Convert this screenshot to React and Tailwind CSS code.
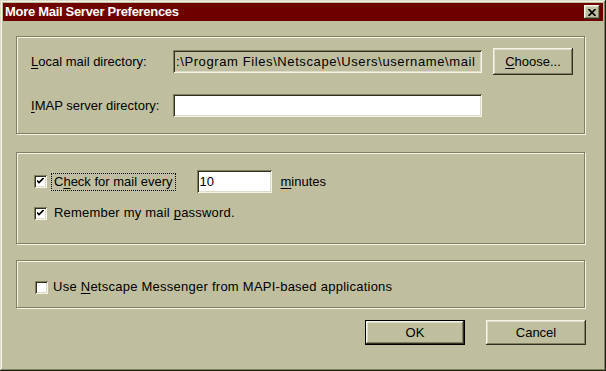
import React from 'react';

const font = { fontFamily: '"Liberation Sans", Arial, sans-serif' };

const raised = 'shadow-[inset_-1px_-1px_#303020,inset_1px_1px_#f4f4e8,inset_-2px_-2px_#808060,inset_2px_2px_#dcdcc8]';
const sunken = 'shadow-[inset_1px_1px_#808060,inset_-1px_-1px_#f4f4e8,inset_2px_2px_#303020,inset_-2px_-2px_#dcdcc8]';
const etched = 'border border-[#808060] shadow-[1px_1px_0_#f4f4e8,inset_1px_1px_0_#f4f4e8]';

const U = ({ children }) => <span className="underline underline-offset-2">{children}</span>;

const Check = ({ checked }) => (
  <div className={`w-[13px] h-[13px] bg-white shrink-0 flex items-center justify-center ${sunken}`}>
    {checked && (
      <svg width="7" height="7" viewBox="0 0 7 7">
        <path d="M0 2.5 L2 4.5 L7 -0.5" stroke="#000" strokeWidth="1.6" fill="none" />
      </svg>
    )}
  </div>
);

const Button = ({ children, w, h, isDefault }) => (
  <div
    className={`flex items-center justify-center text-[13px] text-black ${w} ${h} ${
      isDefault
        ? 'border border-black shadow-[inset_-1px_-1px_#303020,inset_1px_1px_#f4f4e8,inset_-2px_-2px_#808060,inset_2px_2px_#dcdcc8]'
        : raised
    }`}
  >
    {children}
  </div>
);

export default function App() {
  return (
    <div
      style={font}
      className="w-[606px] h-[371px] bg-[#bfbf9f] p-[3px] flex flex-col text-[13px] text-black shadow-[inset_-1px_-1px_#202018,inset_1px_1px_#dcdcc8,inset_-2px_-2px_#808060,inset_2px_2px_#f4f4e8]"
    >
      {/* title bar */}
      <div className="h-[18px] bg-[#6f0000] flex items-center justify-between pl-[2px] pr-[3px]">
        <span className="text-white font-bold text-[13px] tracking-[-0.3px]">More Mail Server Preferences</span>
        <div className={`w-[16px] h-[14px] bg-[#bfbf9f] flex items-center justify-center ${raised}`}>
          <svg width="8" height="7" viewBox="0 0 8 7">
            <path d="M0.5 0 L7.5 7 M7.5 0 L0.5 7" stroke="#000" strokeWidth="1.6" />
          </svg>
        </div>
      </div>

      <div className="flex flex-col pl-[13px] pt-[15px]">
        {/* group 1 */}
        <div className={`w-[569px] h-[98px] ${etched} pl-[14px] pt-[11px]`}>
          <div className="flex items-center h-[27px]">
            <div className="w-[142px]"><U>L</U>ocal mail directory:</div>
            <div className={`w-[309px] h-[23px] flex items-center pl-[3px] overflow-hidden whitespace-nowrap tracking-[0.6px] ${sunken}`}>
              :\Program Files\Netscape\Users\username\mail
            </div>
            <div className="ml-[11px]">
              <Button w="w-[80px]" h="h-[27px]"><U>C</U>hoose...</Button>
            </div>
          </div>
          <div className="flex items-center h-[23px] mt-[19px]">
            <div className="w-[142px]"><U>I</U>MAP server directory:</div>
            <div className={`w-[309px] h-[23px] bg-white ${sunken}`} />
          </div>
        </div>

        {/* group 2 */}
        <div className={`w-[569px] h-[92px] mt-[18px] ${etched} pl-[17px] pt-[17px]`}>
          <div className="flex items-center h-[23px]">
            <Check checked />
            <div className="ml-[4px] h-[18px] px-[2px] flex items-center border border-dotted border-black">
              C<U>h</U>eck for mail every
            </div>
            <div className={`ml-[21px] w-[75px] h-[23px] bg-white flex items-center pl-[3px] ${sunken}`}>10</div>
            <div className="ml-[9px]"><U>m</U>inutes</div>
          </div>
          <div className="flex items-center h-[20px] mt-[10px]">
            <Check checked />
            <div className="ml-[7px] tracking-[0.2px]">Remember my mail <U>p</U>assword.</div>
          </div>
        </div>

        {/* group 3 */}
        <div className={`w-[569px] h-[48px] mt-[16px] ${etched} pl-[18px] pt-[18px]`}>
          <div className="flex items-center h-[16px]">
            <Check />
            <div className="ml-[5px] tracking-[0.25px]">Use <U>N</U>etscape Messenger from MAPI-based applications</div>
          </div>
        </div>

        {/* buttons */}
        <div className="flex justify-end w-[570px] mt-[12px] gap-[21px]">
          <Button w="w-[100px]" h="h-[25px]" isDefault>OK</Button>
          <Button w="w-[100px]" h="h-[25px]">Cancel</Button>
        </div>
      </div>
    </div>
  );
}
